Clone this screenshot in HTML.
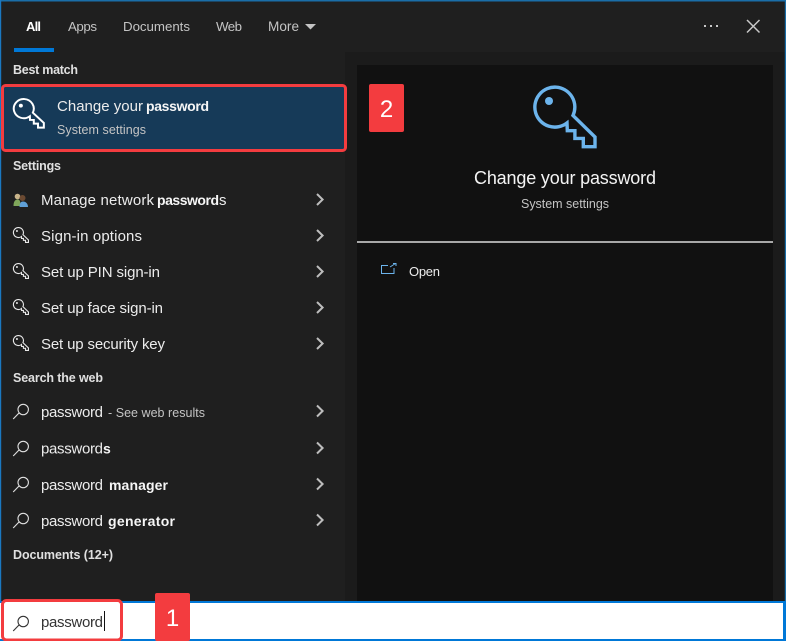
<!DOCTYPE html>
<html><head><meta charset="utf-8"><title>Search</title>
<style>
html,body{margin:0;padding:0;background:#1f1f1f;width:786px;height:641px;overflow:hidden}
svg{display:block}
text{font-family:"Liberation Sans",sans-serif;font-size:15px;fill:#ececec}
.t{font-size:13.3px;fill:#c4c4c4}
.h{font-size:12.5px;font-weight:700;fill:#e0e0e0}
.b{font-size:14px;font-weight:700;fill:#f6f6f6}
.s{font-size:12.5px;fill:#c4c4c4}
.g{fill:none;stroke:#e0e0e0;stroke-width:1.1}
.c{fill:none;stroke:#bdbdbd;stroke-width:2}
</style></head><body>
<svg width="786" height="641" viewBox="0 0 786 641" xmlns="http://www.w3.org/2000/svg">
<defs>
<g id="key"><path d="M567 123A20 20 0 1 1 573 115.500L595 137V146.700H583.300V138.400H574.900V130.700H567.300Z"/><circle cx="549" cy="101" r="4" style="fill:currentColor;stroke:none"/></g>
<g id="mag"><circle cx="23.200" cy="409.500" r="5.200"/><path d="M19 413L13.200 419"/></g>
<path id="chev" d="M317 -5.500L322.600 0L317 5.500"/>
</defs>
<rect width="786" height="641" fill="#1f1f1f"/>
<rect x="345" y="52" width="441" height="550" fill="#1b1b1b"/>
<rect x="357" y="65" width="416" height="537" fill="#111"/>
<rect x="0" y="0" width="786" height="1.500" fill="#1a6ea8"/>
<rect x="0" y="0" width="1.200" height="641" fill="#1a78c0"/>
<rect x="784.800" y="0" width="1.200" height="641" fill="#1a6ea8"/>

<text class="t" x="26" y="31" textLength="15" style="fill:#fff;font-weight:700;font-size:13px">All</text>
<text class="t" x="68" y="31" textLength="29">Apps</text>
<text class="t" x="123" y="31" textLength="67">Documents</text>
<text class="t" x="216" y="31" textLength="26">Web</text>
<text class="t" x="268" y="31" textLength="31" style="font-size:13.600px">More</text>
<path d="M305 24H316L310.500 29.500Z" fill="#c4c4c4"/>
<rect x="14" y="48" width="40" height="4" fill="#0078d7"/>
<rect x="704" y="25" width="2" height="2" fill="#c8c8c8"/><rect x="710" y="25" width="2" height="2" fill="#c8c8c8"/><rect x="716" y="25" width="2" height="2" fill="#c8c8c8"/>
<path d="M747 20L759.500 32.500M759.500 20L747 32.500" stroke="#c8c8c8" stroke-width="1.500" fill="none"/>

<text class="h" x="13" y="74" textLength="65">Best match</text>
<rect x="2.500" y="85.500" width="343" height="65" rx="3" fill="#163a58" stroke="#f33c3f" stroke-width="3"/>
<use href="#key" transform="translate(-253.650 57.200) scale(.5 .48)" style="fill:none;stroke:#fff;stroke-width:4;color:#fff"/>
<text x="57" y="111" textLength="86">Change your</text>
<text class="b" x="146" y="111" textLength="63">password</text>
<text class="s" x="57" y="134" textLength="89">System settings</text>

<text class="h" x="13" y="170" textLength="48">Settings</text>
<g>
<circle cx="17.500" cy="196.500" r="2.800" fill="#c9b48a"/><path d="M13.500 206c0-5 2-6.500 4-6.500s3 1 3 6.500z" fill="#7fa65a"/>
<circle cx="22.500" cy="198" r="3" fill="#6b4a32"/><path d="M19.500 207c0-4 1.500-5.500 3.500-5.500s5 1.500 5 5.500z" fill="#5f9fd6"/>
</g>
<text x="41" y="205" textLength="113">Manage network</text>
<text class="b" x="157" y="205" textLength="62">password</text><text x="219" y="205" textLength="8">s</text>

<text x="41" y="241" textLength="101">Sign-in options</text>
<text x="41" y="277" textLength="119">Set up PIN sign-in</text>
<text x="41" y="313" textLength="122">Set up face sign-in</text>
<text x="41" y="349" textLength="124">Set up security key</text>
<g style="fill:none;stroke:#e8e8e8;stroke-width:4.400;color:#e8e8e8">
<use href="#key" transform="translate(-120.300 205.750) scale(.25)"/>
<use href="#key" transform="translate(-120.300 241.750) scale(.25)"/>
<use href="#key" transform="translate(-120.300 277.750) scale(.25)"/>
<use href="#key" transform="translate(-120.300 313.750) scale(.25)"/>
</g>

<text class="h" x="13" y="382" textLength="90">Search the web</text>
<use href="#mag" class="g"/>
<use href="#mag" class="g" y="37"/>
<use href="#mag" class="g" y="73"/>
<use href="#mag" class="g" y="109"/>
<text x="41" y="417" textLength="62">password</text>
<text class="s" x="108" y="417" textLength="97">- See web results</text>
<text x="41" y="453.500" textLength="62">password</text><text class="b" x="103" y="453.500" textLength="7">s</text>
<text x="41" y="490" textLength="62">password</text><text class="b" x="109" y="490" textLength="59">manager</text>
<text x="41" y="526" textLength="62">password</text><text class="b" x="108" y="526" textLength="67">generator</text>

<g class="c">
<use href="#chev" y="199.500"/><use href="#chev" y="235.500"/><use href="#chev" y="271.500"/><use href="#chev" y="307.500"/><use href="#chev" y="343.500"/>
<use href="#chev" y="411"/><use href="#chev" y="448"/><use href="#chev" y="484"/><use href="#chev" y="520"/>
</g>
<text class="h" x="13" y="559" textLength="100">Documents (12+)</text>

<use href="#key" style="fill:none;stroke:#6cb4ec;stroke-width:3.400;color:#6cb4ec"/>
<text x="474" y="184" textLength="182" style="font-size:18px;fill:#f4f4f4">Change your password</text>
<text class="s" x="521" y="208" textLength="88">System settings</text>
<rect x="357" y="241" width="416" height="2" fill="#a8a8a8"/>
<path d="M388 265.500H381.500V273.500H394V268" fill="none" stroke="#6cb4ec" stroke-width="1"/>
<path d="M390 267L395.500 263.500M393 263.500H396V266" fill="none" stroke="#6cb4ec" stroke-width="1"/>
<text x="409" y="276" textLength="31" style="font-size:13px">Open</text>

<rect x="0" y="601" width="786" height="40" fill="#0078d7"/>
<rect x="0" y="603" width="783" height="36" fill="#fff"/>
<rect x="2.500" y="600.500" width="119" height="39.500" rx="4" fill="#fff" stroke="#f33c3f" stroke-width="3"/>
<use href="#mag" y="212" style="fill:none;stroke:#333;stroke-width:1.100"/>
<text x="41" y="627" textLength="62" style="fill:#333">password</text>
<rect x="104" y="611" width="1" height="20" fill="#111"/>

<rect x="155" y="593" width="35" height="48" rx="2" fill="#f33c3f"/>
<text x="172.500" y="626" text-anchor="middle" style="font-size:24px;fill:#fff">1</text>
<rect x="369" y="84" width="35" height="48" rx="2" fill="#f33c3f"/>
<text x="386.500" y="117" text-anchor="middle" style="font-size:24px;fill:#fff">2</text>
</svg>
</body></html>
